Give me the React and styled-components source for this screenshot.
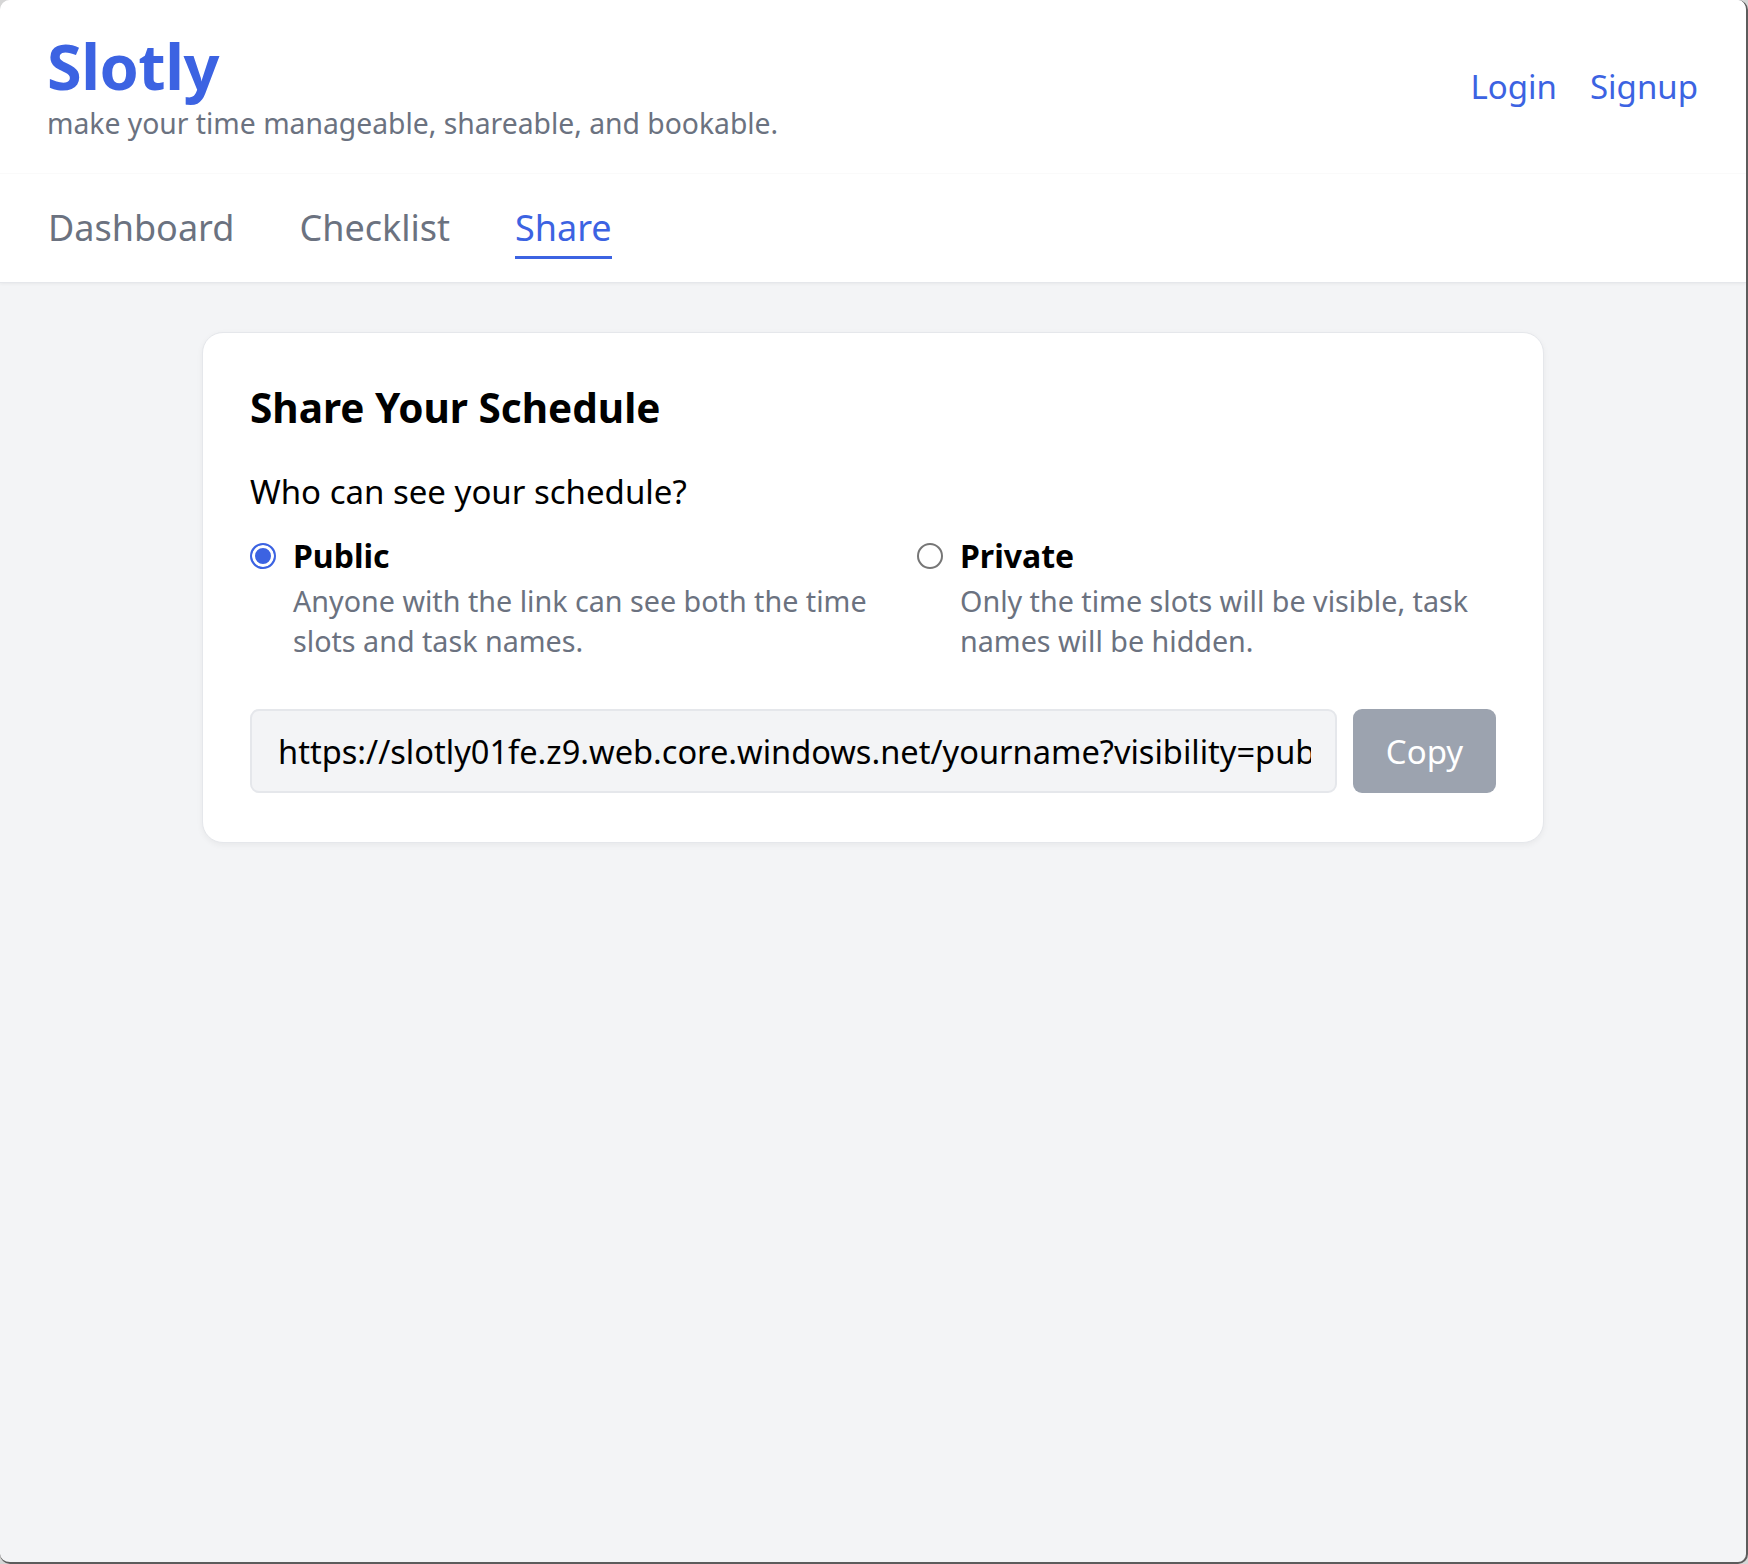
import React, { useState } from 'react';
import styled, { createGlobalStyle, css } from 'styled-components';

const GlobalStyle = createGlobalStyle`
  html, body {
    margin: 0;
    padding: 0;
    background: #d6d6d6;
  }
  * {
    box-sizing: border-box;
  }
`;

const BLUE = '#3c63e2';
const FONT = `"Noto Sans", "Open Sans", sans-serif`;

const Frame = styled.div`
  width: 1748px;
  height: 1564px;
  background: #f3f4f6;
  border-right: 2px solid #5c5c5c;
  border-bottom: 2px solid #5c5c5c;
  border-radius: 10px;
  overflow: hidden;
  font-family: ${FONT};
  color: #111;
`;

const Header = styled.header`
  background: #fff;
  border-bottom: 1px solid #e5e7eb;
  box-shadow: 0 1px 3px rgba(0, 0, 0, 0.05);
`;

const TopRow = styled.div`
  display: flex;
  align-items: center;
  justify-content: space-between;
  padding: 30px 48px 29px 47px;
  border-bottom: 1px solid #fafafa;
`;

const Brand = styled.div`
  display: flex;
  flex-direction: column;
`;

const Logo = styled.h1`
  margin: 0;
  font-size: 63px;
  line-height: 72px;
  font-weight: 700;
  color: ${BLUE};
  letter-spacing: -0.5px;
`;

const Tagline = styled.p`
  margin: 0;
  font-size: 28.3px;
  line-height: 42px;
  color: #6b7280;
`;

const AuthLinks = styled.nav`
  display: flex;
  gap: 33px;
`;

const AuthLink = styled.a`
  font-size: 33px;
  line-height: 52px;
  color: ${BLUE};
  text-decoration: none;
  cursor: pointer;
`;

const Tabs = styled.nav`
  display: flex;
  gap: 65px;
  padding: 26px 48px 23px 48px;
`;

const Tab = styled.a`
  font-size: 36px;
  line-height: 56px;
  color: #6b7280;
  text-decoration: none;
  border-bottom: 3.5px solid transparent;
  cursor: pointer;

  ${props => props.active && css`
    color: ${BLUE};
    border-bottom-color: ${BLUE};
  `}
`;

const Main = styled.main`
  padding: 49px 24px;
`;

const Card = styled.section`
  width: 1342px;
  margin: 0 auto;
  background: #fff;
  border: 1px solid #e5e7eb;
  border-radius: 21px;
  box-shadow: 0 2px 6px rgba(0, 0, 0, 0.05);
  padding: 47px 47px 49px 47px;
`;

const Title = styled.h2`
  margin: 0;
  font-size: 40.5px;
  line-height: 56px;
  font-weight: 700;
  color: #000;
`;

const Question = styled.p`
  margin: 30px 0 0;
  font-size: 33px;
  line-height: 52px;
  color: #000;
`;

const Options = styled.div`
  display: grid;
  grid-template-columns: 667px 1fr;
  margin-top: 14px;
`;

const Option = styled.label`
  display: grid;
  grid-template-columns: 43px 1fr;
  align-items: start;
  cursor: pointer;
`;

const Radio = styled.input`
  appearance: none;
  margin: 11px 0 0 0;
  width: 26px;
  height: 26px;
  border-radius: 50%;
  border: 2px solid #767676;
  background: #fff;
  cursor: pointer;

  &:checked {
    border-color: ${BLUE};
    background: ${BLUE};
    box-shadow: inset 0 0 0 3px #fff;
  }
`;

const OptionText = styled.div`
  display: flex;
  flex-direction: column;
  gap: 1px;
`;

const OptionName = styled.span`
  font-size: 32px;
  line-height: 48px;
  font-weight: 700;
  color: #000;
`;

const OptionDesc = styled.span`
  font-size: 28.7px;
  line-height: 40px;
  color: #6b7280;
`;

const LinkRow = styled.div`
  display: flex;
  gap: 16px;
  margin-top: 48px;
`;

const LinkInput = styled.input`
  flex: 1;
  min-width: 0;
  height: 84px;
  padding: 0 24px 0 26px;
  background: #f3f4f6;
  border: 2px solid #e5e7eb;
  border-radius: 9px;
  font-family: ${FONT};
  font-size: 32.6px;
  color: #000;
  outline: none;
`;

const CopyButton = styled.button`
  width: 143px;
  height: 84px;
  border: none;
  border-radius: 9px;
  background: #9ca3af;
  color: #fff;
  font-family: ${FONT};
  font-size: 33px;
  cursor: pointer;
`;

const options = [
  {
    id: 'public',
    name: 'Public',
    desc: 'Anyone with the link can see both the time slots and task names.',
  },
  {
    id: 'private',
    name: 'Private',
    desc: 'Only the time slots will be visible, task names will be hidden.',
  },
];

export default function App() {
  const [visibility, setVisibility] = useState('public');
  const link = `https://slotly01fe.z9.web.core.windows.net/yourname?visibility=${visibility}`;

  return (
    <>
      <GlobalStyle />
      <Frame>
        <Header>
          <TopRow>
            <Brand>
              <Logo>Slotly</Logo>
              <Tagline>make your time manageable, shareable, and bookable.</Tagline>
            </Brand>
            <AuthLinks>
              <AuthLink>Login</AuthLink>
              <AuthLink>Signup</AuthLink>
            </AuthLinks>
          </TopRow>
          <Tabs>
            <Tab>Dashboard</Tab>
            <Tab>Checklist</Tab>
            <Tab active>Share</Tab>
          </Tabs>
        </Header>

        <Main>
          <Card>
            <Title>Share Your Schedule</Title>
            <Question>Who can see your schedule?</Question>
            <Options>
              {options.map(opt => (
                <Option key={opt.id}>
                  <Radio
                    type="radio"
                    name="visibility"
                    checked={visibility === opt.id}
                    onChange={() => setVisibility(opt.id)}
                  />
                  <OptionText>
                    <OptionName>{opt.name}</OptionName>
                    <OptionDesc>{opt.desc}</OptionDesc>
                  </OptionText>
                </Option>
              ))}
            </Options>
            <LinkRow>
              <LinkInput readOnly value={link} />
              <CopyButton>Copy</CopyButton>
            </LinkRow>
          </Card>
        </Main>
      </Frame>
    </>
  );
}
